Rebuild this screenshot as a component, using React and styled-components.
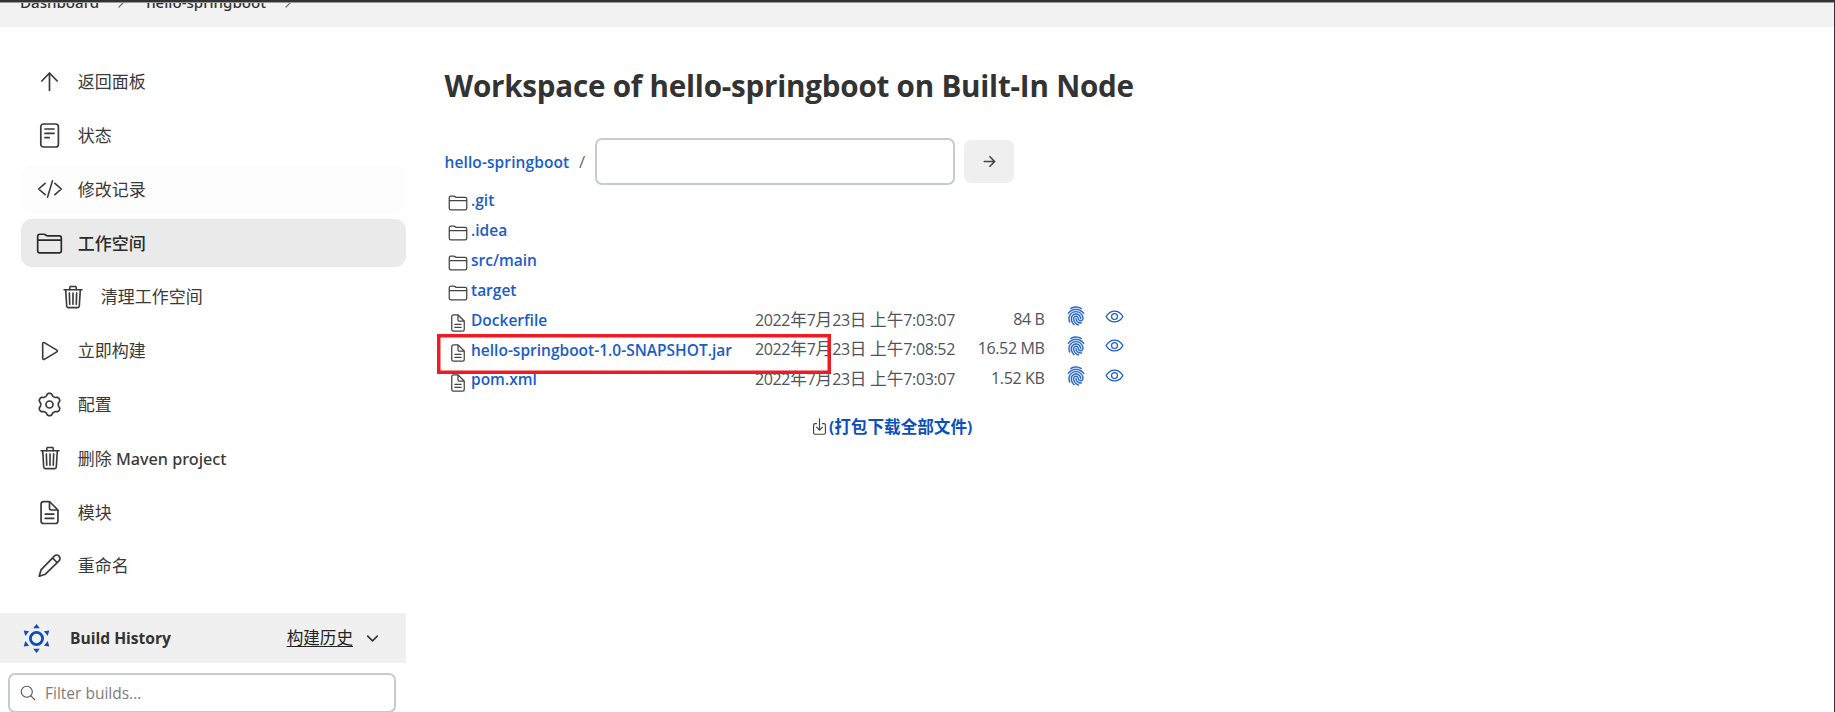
import React from 'react';
import styled, { createGlobalStyle, css } from 'styled-components';
import {
  IoCodeSlashOutline, IoFolderOutline, IoTrashOutline, IoPlayOutline,
  IoDocumentTextOutline, IoSearchOutline, IoChevronDownOutline,
  IoFingerPrintOutline, IoEyeOutline, IoDownloadOutline, IoArrowForwardOutline, IoChevronForwardOutline,
} from 'react-icons/io5';

const latin = '"Open Sans", "Noto Sans CJK SC", sans-serif';
const medium = '"Noto Sans", "Noto Sans CJK SC", sans-serif';

const GlobalStyle = createGlobalStyle`
  * { box-sizing: border-box; }
  body {
    margin: 0;
    height: 712px;
    overflow: hidden;
    background: #fff;
    color: #333;
    font-family: ${latin};
    font-size: 15.3px;
  }
  a { color: inherit; text-decoration: none; }
`;

const Page = styled.div`
  height: 712px;
  overflow: hidden;
  border-top: 2px solid #333;
  border-right: 1px solid #333;
`;

const Breadcrumbs = styled.nav`
  height: 25px;
  padding: 0 20px;
  display: flex;
  align-items: flex-start;
  overflow: hidden;
  background: #f2f2f2;
  border-top: 1px solid #999;
  font: 500 15.1px/20px ${medium};
`;

const Crumb = styled.a`
  flex: none;
  margin-top: -11px;
`;

const CrumbArrow = styled(IoChevronForwardOutline)`
  flex: none;
  width: 14px;
  height: 14px;
  margin: -7px 18px 0 15px;
  color: #777;
`;

const Columns = styled.div`
  display: flex;
`;

const Sidebar = styled.aside`
  width: 406px;
  flex: none;
`;

const Tasks = styled.ul`
  list-style: none;
  margin: 0;
  padding: 30.8px 0 0 21px;
`;

const Task = styled.li`
  height: 48px;
  margin-bottom: 5.8px;
  padding-left: ${p => (p.$nested ? 38 : 15)}px;
  display: flex;
  align-items: center;
  gap: 14.7px;
  border-radius: 11px;
  color: #3a3a3a;
  font: 500 16.2px/24px ${medium};
  ${p => p.$hovered && css`background: #fdfdfd;`}
  ${p => p.$active && css`background: #eaeaea; color: #2a2a2a;`}
`;

const TaskIcon = styled.span`
  width: 27px;
  height: 27px;
  flex: none;
  display: flex;
  align-items: center;
  justify-content: center;
`;

const TaskLabel = styled.span`
  white-space: pre;
`;

const Han = styled.span`
  font-family: "Noto Sans CJK SC", sans-serif;
  font-size: ${p => p.$size}px;
  font-weight: ${p => p.$weight};
  letter-spacing: 0;
`;

const HistoryHeader = styled.div`
  height: 50px;
  margin-top: 23.2px;
  padding: 0 25px 0 21px;
  display: flex;
  align-items: center;
  background: #f0f0f0;
`;

const HistoryTitle = styled.strong`
  flex: 1;
  margin: -1px 0 0 18px;
  font: 700 15.6px/24px ${latin};
`;

const HistoryLink = styled.a`
  margin: -2px 11px 0 0;
  line-height: 24px;
  color: #222;
  text-decoration: underline;
  text-underline-offset: 2px;
`;

const FilterBox = styled.label`
  width: 388px;
  height: 40px;
  margin: 10px 0 0 8px;
  padding: 0 9px;
  display: flex;
  align-items: center;
  gap: 8px;
  border: 2px solid #c3ccd1;
  border-radius: 7px;
  color: #555;
`;

const FilterHint = styled.span`
  font-size: 15.5px;
  color: #7d7d7d;
`;

const Main = styled.main`
  padding: 39px 0 0 38.5px;
`;

const Title = styled.h1`
  margin: 0;
  font: 700 29.6px/40px ${latin};
  letter-spacing: -0.22px;
  white-space: nowrap;
`;

const PathBar = styled.div`
  height: 47px;
  margin-top: 32px;
  display: flex;
  align-items: center;
`;

const Link = styled.a`
  font: 600 15.5px/24px ${latin};
  color: #1a5dc8;
`;

const PathLink = styled(Link)`
  width: 126px;
  letter-spacing: 0.1px;
`;

const Slash = styled.span`
  width: 24px;
  padding-left: 8.5px;
  color: #6b6b6b;
  font-size: 17px;
`;

const PathInput = styled.input`
  width: 360px;
  height: 47px;
  border: 2px solid #c3ccd1;
  border-radius: 7px;
  background: #fff;
  outline: none;
`;

const GoButton = styled.button`
  width: 50px;
  height: 43px;
  margin-left: 9.5px;
  padding: 0;
  display: flex;
  align-items: center;
  justify-content: center;
  border: 0;
  border-radius: 7px;
  background: #efefef;
  color: #444;
`;

const Files = styled.div`
  margin-top: 1px;
`;

const FileRow = styled.div`
  height: 29.9px;
  display: grid;
  grid-template-columns: 26.5px 284px 200px 89.5px 41px 38px;
  align-items: center;
  color: #4d545d;
  white-space: nowrap;
`;

const FileIcon = styled.span`
  height: 20px;
  padding-left: 3px;
  margin-top: 5px;
  color: #444;
  svg { display: block; }
`;

const FileLink = styled(Link)`
  margin-top: -1.6px;
`;

const FileDate = styled.span`
  height: 24px;
  line-height: 24px;
  margin-top: -4px;
  font-size: 16px;
  letter-spacing: -0.36px;
`;

const FileSize = styled(FileDate)`
  text-align: right;
`;

const Action = styled.a`
  height: 20px;
  margin-top: -9px;
  display: flex;
  align-items: center;
  justify-content: flex-end;
  color: #1a5dc8;
`;

const DownloadAll = styled.a`
  margin: 19px 0 0 365.5px;
  display: flex;
  align-items: center;
  color: #0b4fbf;
  font: 700 15.5px/24px ${latin};
  svg { color: #444; }
`;

const Highlight = styled.div`
  position: absolute;
  left: 437px;
  top: 334px;
  width: 394px;
  height: 40px;
  border: 3px solid #ed1c24;
  box-shadow: inset 0 0 0 0.5px #ed1c24;
`;

function Mixed({ children, size = 16.6, weight = 400 }) {
  return children.split(/([\u4e00-\u9fff]+)/).filter(Boolean).map((run, i) =>
    /[\u4e00-\u9fff]/.test(run) ? <Han key={i} $size={size} $weight={weight}>{run}</Han> : run);
}

const LineIcon = styled.svg.attrs({ viewBox: '0 0 27 27' })`
  width: 27px;
  height: 27px;
  fill: none;
  stroke: currentColor;
  stroke-width: 1.7;
  stroke-linecap: round;
  stroke-linejoin: round;
`;

const UpIcon = () => (
  <LineIcon><path d="M13.5 22.3V5M5.8 13l7.7-8 7.7 8" /></LineIcon>
);

const StatusIcon = () => (
  <LineIcon>
    <rect x="4.8" y="2" width="17.6" height="23" rx="2.8" />
    <path d="M9 7h9M9 11.4h9M9 15.7h4.2" />
  </LineIcon>
);

const PencilIcon = () => (
  <LineIcon><path d="M3.2 24.2 5 17.9 18.3 4.1a3.3 3.3 0 0 1 4.7 4.7L9.4 22.2ZM16.6 6l4.6 4.6" /></LineIcon>
);

// Six-lobed cog outline, sampled around the centre with one lobe at the top.
const cogPoints = Array.from({ length: 120 }, (_, i) => {
  const a = (i / 120) * Math.PI * 2;
  const r = 10 + 1.3 * Math.tanh(1.6 * Math.cos(6 * a));
  return `${(13.5 + r * Math.sin(a)).toFixed(2)},${(13.5 - r * Math.cos(a)).toFixed(2)}`;
}).join(' ');

const CogIcon = () => (
  <LineIcon>
    <polygon points={cogPoints} />
    <circle cx="13.5" cy="13.5" r="3.5" />
  </LineIcon>
);

const BuildIcon = () => (
  <svg width="31" height="31" viewBox="-15.5 -15.5 31 31" fill="#0b4fbf">
    <circle r="6.1" fill="none" stroke="#0b4fbf" strokeWidth="2.8" />
    <path d="M0-14.6 3.3-10.2H-3.3ZM0 14.6-3.3 10.2H3.3ZM-12.8-8-7.4-7.2-11.2-2.6ZM12.8-8 7.4-7.2 11.2-2.6ZM-12.8 8-7.4 7.2-11.2 2.6ZM12.8 8 7.4 7.2 11.2 2.6Z" />
  </svg>
);

const tasks = [
  { label: '返回面板', icon: <UpIcon /> },
  { label: '状态', icon: <StatusIcon /> },
  { label: '修改记录', icon: <IoCodeSlashOutline size={26} />, hovered: true },
  { label: '工作空间', icon: <IoFolderOutline size={27} />, active: true },
  { label: '清理工作空间', icon: <IoTrashOutline size={26} />, nested: true },
  { label: '立即构建', icon: <IoPlayOutline size={26} /> },
  { label: '配置', icon: <CogIcon /> },
  { label: '删除 Maven project', icon: <IoTrashOutline size={26} /> },
  { label: '模块', icon: <IoDocumentTextOutline size={27} /> },
  { label: '重命名', icon: <PencilIcon /> },
];

const files = [
  { name: '.git', folder: true },
  { name: '.idea', folder: true },
  { name: 'src/main', folder: true },
  { name: 'target', folder: true },
  { name: 'Dockerfile', date: '2022年7月23日 上午7:03:07', size: '84 B' },
  { name: 'hello-springboot-1.0-SNAPSHOT.jar', date: '2022年7月23日 上午7:08:52', size: '16.52 MB' },
  { name: 'pom.xml', date: '2022年7月23日 上午7:03:07', size: '1.52 KB' },
];

export default function App() {
  return (
    <Page>
      <GlobalStyle />
      <Breadcrumbs>
        <Crumb>Dashboard</Crumb>
        <CrumbArrow />
        <Crumb>hello-springboot</Crumb>
        <CrumbArrow />
      </Breadcrumbs>
      <Columns>
        <Sidebar>
          <Tasks>
            {tasks.map(t => (
              <Task key={t.label} $nested={t.nested} $active={t.active} $hovered={t.hovered}>
                <TaskIcon>{t.icon}</TaskIcon>
                <TaskLabel><Mixed size={17} weight={t.active ? 500 : 400}>{t.label}</Mixed></TaskLabel>
              </Task>
            ))}
          </Tasks>
          <HistoryHeader>
            <BuildIcon />
            <HistoryTitle>Build History</HistoryTitle>
            <HistoryLink><Mixed>构建历史</Mixed></HistoryLink>
            <IoChevronDownOutline size={17} />
          </HistoryHeader>
          <FilterBox>
            <IoSearchOutline size={18} />
            <FilterHint>Filter builds...</FilterHint>
          </FilterBox>
        </Sidebar>
        <Main>
          <Title>Workspace of hello-springboot on Built-In Node</Title>
          <PathBar>
            <PathLink>hello-springboot</PathLink>
            <Slash>/</Slash>
            <PathInput />
            <GoButton><IoArrowForwardOutline size={17} /></GoButton>
          </PathBar>
          <Files>
            {files.map(f => (
              <FileRow key={f.name}>
                <FileIcon>{f.folder ? <IoFolderOutline size={20} /> : <IoDocumentTextOutline size={20} />}</FileIcon>
                <FileLink>{f.name}</FileLink>
                {f.date && (
                  <>
                    <FileDate><Mixed>{f.date}</Mixed></FileDate>
                    <FileSize>{f.size}</FileSize>
                    <Action><IoFingerPrintOutline size={20} stroke="currentColor" strokeWidth={12} /></Action>
                    <Action><IoEyeOutline size={19} /></Action>
                  </>
                )}
              </FileRow>
            ))}
          </Files>
          <DownloadAll>
            <IoDownloadOutline size={19} />
            <span><Mixed weight={700}>(打包下载全部文件)</Mixed></span>
          </DownloadAll>
        </Main>
      </Columns>
      <Highlight />
    </Page>
  );
}
